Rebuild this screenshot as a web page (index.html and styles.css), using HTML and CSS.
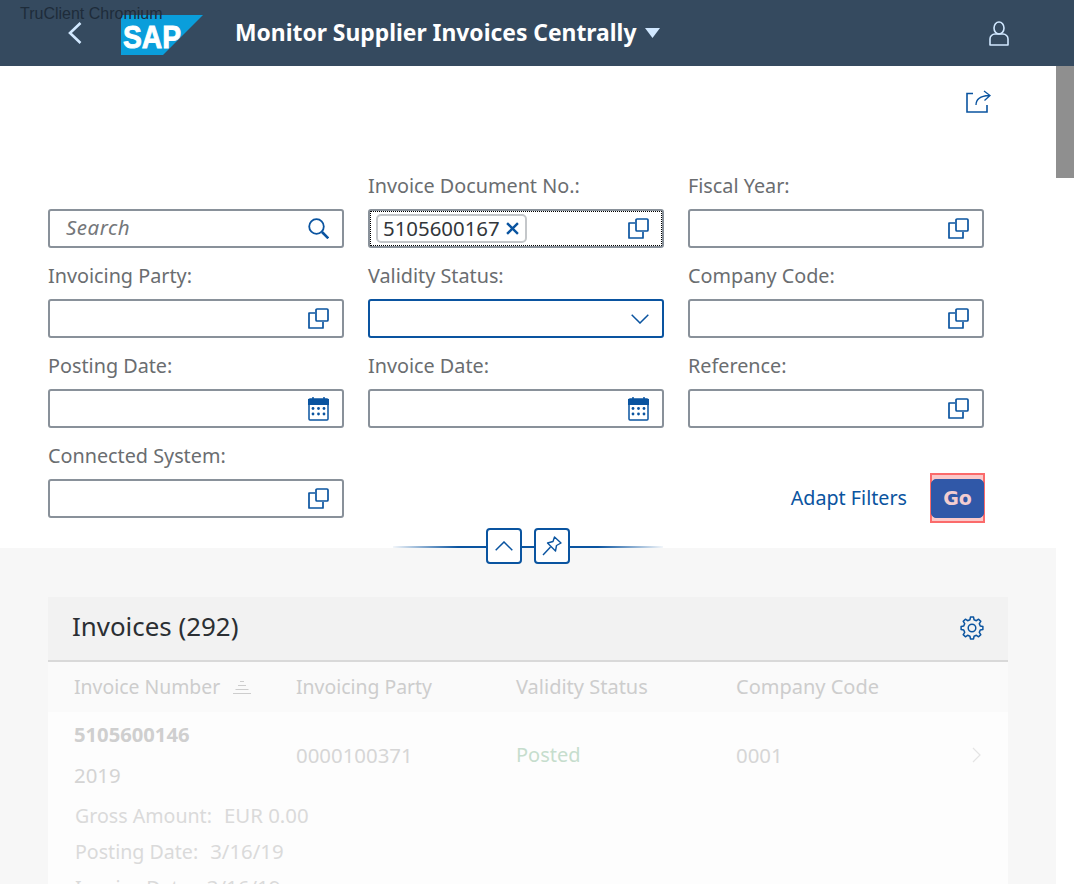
FILE: index.html
```html
<!DOCTYPE html>
<html lang="en">
<head>
<meta charset="utf-8">
<title>Monitor Supplier Invoices Centrally</title>
<link rel="stylesheet" href="styles.css">
</head>
<body>
<svg class="defs" xmlns="http://www.w3.org/2000/svg">
  <symbol id="i-vh" viewBox="0 0 21 21">
    <path d="M7 5H1v15h14v-6" fill="none" stroke="currentColor" stroke-width="1.700" stroke-linejoin="round"/>
    <rect x="8" y="1" width="12" height="12" rx="1" fill="none" stroke="currentColor" stroke-width="1.700"/>
  </symbol>
  <symbol id="i-cal" viewBox="0 0 21 25">
    <rect x="1" y="3" width="19" height="21" rx="1" fill="#fff" stroke="currentColor" stroke-width="1.500"/>
    <path d="M0 3h21v6H0z" fill="currentColor"/>
    <path d="M5 1v4M16 1v4" stroke="currentColor" stroke-width="1.500"/>
    <g fill="currentColor">
      <circle cx="5" cy="12.500" r="1.400"/><circle cx="10.500" cy="12.500" r="1.400"/><circle cx="16" cy="12.500" r="1.400"/>
      <circle cx="5" cy="18" r="1.400"/><circle cx="10.500" cy="18" r="1.400"/><circle cx="16" cy="18" r="1.400"/>
    </g>
  </symbol>
</svg>

<header class="shell">
  <span class="tool-label">TruClient Chromium</span>
  <svg class="back" viewBox="0 0 14 22"><path d="M12.500 1 2 11l10.500 10" fill="none" stroke="currentColor" stroke-width="2.600"/></svg>
  <svg class="logo" viewBox="0 0 82 40">
    <path d="M0 0h82L42 40H0z" fill="#0a9edb"/>
    <text x="2" y="33" class="logo-text" textLength="58" lengthAdjust="spacingAndGlyphs">SAP</text>
  </svg>
  <h1 class="title">Monitor Supplier Invoices Centrally</h1>
  <svg class="caret" viewBox="0 0 15 10"><path d="M0 0h15L7.500 10z" fill="currentColor"/></svg>
  <svg class="user" viewBox="0 0 20 25"><g fill="none" stroke="currentColor" stroke-width="1.600"><ellipse cx="10" cy="7" rx="5" ry="6"/><path d="M1 24v-6a5 5 0 0 1 5-5h8a5 5 0 0 1 5 5v6z" stroke-linejoin="round"/></g></svg>
</header>

<div class="page">
  <main class="main">
    <section class="filters">
      <div class="share-row">
        <svg class="share" viewBox="0 0 25 23"><g fill="none" stroke="currentColor" stroke-width="1.600"><path d="M7 3.500H1v18.500h20V15"/><path d="M10 15c0-5 4-9 13-9.500M18 1l6 4.500-5.500 5" stroke-width="1.300"/></g></svg>
      </div>
      <div class="filter-grid">
        <div class="field">
          <div class="input"><span class="placeholder">Search</span>
            <svg class="ico search" viewBox="0 0 21 21"><g fill="none" stroke="currentColor"><circle cx="8.500" cy="8.500" r="7.300" stroke-width="1.800"/><path d="m14 14 6.300 6.300" stroke-width="2.600"/></g></svg>
          </div>
        </div>
        <div class="field">
          <label class="label">Invoice Document No.:</label>
          <div class="input focused">
            <span class="token">5105600167<svg class="token-x" viewBox="0 0 12 12"><path d="m1 1 10 10M11 1 1 11" stroke="currentColor" stroke-width="2.200"/></svg></span>
            <svg class="ico"><use href="#i-vh"/></svg>
          </div>
        </div>
        <div class="field">
          <label class="label">Fiscal Year:</label>
          <div class="input"><svg class="ico"><use href="#i-vh"/></svg></div>
        </div>

        <div class="field">
          <label class="label">Invoicing Party:</label>
          <div class="input"><svg class="ico"><use href="#i-vh"/></svg></div>
        </div>
        <div class="field">
          <label class="label">Validity Status:</label>
          <div class="input active"><svg class="ico chev" viewBox="0 0 18 10"><path d="m.7.7 8.300 8.300L17.300.7" fill="none" stroke="currentColor" stroke-width="1.500"/></svg></div>
        </div>
        <div class="field">
          <label class="label">Company Code:</label>
          <div class="input"><svg class="ico"><use href="#i-vh"/></svg></div>
        </div>

        <div class="field">
          <label class="label">Posting Date:</label>
          <div class="input"><svg class="ico cal"><use href="#i-cal"/></svg></div>
        </div>
        <div class="field">
          <label class="label">Invoice Date:</label>
          <div class="input"><svg class="ico cal"><use href="#i-cal"/></svg></div>
        </div>
        <div class="field">
          <label class="label">Reference:</label>
          <div class="input"><svg class="ico"><use href="#i-vh"/></svg></div>
        </div>

        <div class="field">
          <label class="label">Connected System:</label>
          <div class="input"><svg class="ico"><use href="#i-vh"/></svg></div>
        </div>
        <div class="actions">
          <a class="adapt">Adapt Filters</a>
          <button class="go">Go</button>
        </div>
      </div>
      <div class="collapse-row">
        <span class="rule rule-left"></span>
        <span class="round-btn"><svg class="btn-chev" viewBox="0 0 18 10"><path d="M.7 9.300 9 1l8.300 8.300" fill="none" stroke="currentColor" stroke-width="1.500"/></svg></span>
        <span class="rule-mid"></span>
        <span class="round-btn"><svg class="btn-pin" viewBox="0 0 20 20"><g fill="none" stroke="currentColor" stroke-width="1.400" stroke-linejoin="round"><path d="M12.500 1 19 7l-4.500 2.500-1 5.500-8-8 5.500-1.500z"/><path d="m8.500 11-7.500 8" /></g></svg></span>
        <span class="rule rule-right"></span>
      </div>
    </section>

    <section class="content">
      <div class="panel">
        <div class="toolbar">
          <h2 class="panel-title">Invoices (292)</h2>
          <svg class="gear" viewBox="0 0 24 24"><g fill="none" stroke="currentColor" stroke-width="1.500" stroke-linejoin="round"><path d="M9.940 3.750 10.470 1.110H13.530L14.060 3.750 16.380 4.710 18.620 3.210 20.790 5.380 19.290 7.620 20.250 9.940 22.890 10.470V13.530L20.250 14.060 19.290 16.380 20.790 18.620 18.620 20.790 16.380 19.290 14.060 20.250 13.530 22.890H10.470L9.940 20.250 7.620 19.290 5.380 20.790 3.210 18.620 4.710 16.380 3.750 14.060 1.110 13.530V10.470L3.750 9.940 4.710 7.620 3.210 5.380 5.380 3.210 7.620 4.710z"/><circle cx="12" cy="12" r="3.800"/></g></svg>
        </div>
        <div class="table-head">
          <span class="col-head">Invoice Number<svg class="sort" viewBox="0 0 18 13"><path d="M7 .5h4M5 4.500h8M2.500 8.500h13M0 12.500h18" stroke="currentColor"/></svg></span>
          <span class="col-head">Invoicing Party</span>
          <span class="col-head col-wide">Validity Status</span>
          <span class="col-head col-wide">Company Code</span>
        </div>
        <div class="table-row">
          <div class="cell-main">
            <div class="inv-no">5105600146</div>
            <div class="inv-year">2019</div>
            <div class="inv-attrs">
              <div class="attr"><span class="attr-name">Gross Amount:</span><span class="attr-val">EUR 0.00</span></div>
              <div class="attr"><span class="attr-name">Posting Date:</span><span class="attr-val">3/16/19</span></div>
              <div class="attr"><span class="attr-name">Invoice Date:</span><span class="attr-val">3/16/19</span></div>
            </div>
          </div>
          <div class="cell num">0000100371</div>
          <div class="cell posted">Posted</div>
          <div class="cell num">0001</div>
          <svg class="row-chev" viewBox="0 0 9 16"><path d="m1 1 7 7-7 7" fill="none" stroke="currentColor" stroke-width="1.200"/></svg>
        </div>
      </div>
    </section>
  </main>
  <div class="scrollbar"><div class="thumb"></div></div>
</div>
</body>
</html>
```

FILE: styles.css
```css
* { box-sizing: border-box; }

html, body {
  margin: 0;
  height: 100%;
  overflow: hidden;
  background: #fff;
  font-family: "Noto Sans", "Open Sans", sans-serif;
  font-size: 18px;
  color: #32363a;
}

.defs { display: none; }

/* Shell header */
.shell {
  position: relative;
  height: 66px;
  background: #354a5f;
  display: flex;
  align-items: center;
  color: #d1e8ff;
}
.tool-label {
  position: absolute;
  left: 20px;
  top: 5px;
  font: 16px/18px "Liberation Sans", Arial, sans-serif;
  color: #1e2c3a;
  z-index: 2;
}
.back { width: 14px; height: 22px; margin-left: 68px; }
.logo { width: 82px; height: 40px; margin-left: 39px; margin-top: 4px; }
.logo-text {
  font: 700 32px "Liberation Sans", Arial, sans-serif;
  fill: #fff;
  stroke: #fff;
  stroke-width: .9px;
}
.title {
  margin: -2px 0 0 32px;
  font-size: 22.850px;
  font-weight: 700;
  color: #fff;
  white-space: nowrap;
  width: 402px;
}
.caret { width: 15px; height: 10px; margin-left: 8px; }
.user { width: 20px; height: 25px; margin-left: auto; margin-right: 65px; }

/* Page */
.page { display: flex; height: 818px; }
.main { flex: 1; min-width: 0; overflow: hidden; display: flex; flex-direction: column; }
.scrollbar { width: 18px; background: #fff; }
.thumb { height: 112px; background: #8f8f8f; }

/* Filter bar */
.filters { height: 482px; flex: none; background: #fff; display: flex; flex-direction: column; }
.share-row { height: 92px; flex: none; display: flex; justify-content: flex-end; padding: 24px 65px 0 0; }
.share { width: 25px; height: 23px; color: #0a54a0; }

.filter-grid {
  margin-left: 48px;
  width: 936px;
  display: grid;
  grid-template-columns: repeat(3, 296px);
  grid-auto-rows: 90px;
  column-gap: 24px;
}
.field { display: flex; flex-direction: column; justify-content: flex-end; }
.label { color: #6a6d70; font-size: 19.800px; line-height: 24px; margin-bottom: 11px; white-space: nowrap; }

.input {
  height: 39px;
  border: 2px solid #89919a;
  border-radius: 3px;
  display: flex;
  align-items: center;
  background: #fff;
  padding: 0 13px 0 16px;
}
.input.focused {
  outline: 1px dotted #000;
  outline-offset: -3px;
  padding-left: 6px;
}
.input.active { border-color: #0a54a0; }
.placeholder { font-style: italic; color: #74777a; font-size: 20.500px; letter-spacing: .5px; margin-bottom: 3px; }
.ico { width: 21px; height: 21px; margin-left: auto; color: #0a54a0; flex: none; }
.ico.cal { height: 25px; }
.ico.chev { width: 18px; height: 10px; }

.token {
  display: flex;
  align-items: center;
  height: 29px;
  border: 2px solid #c4c7ca;
  border-radius: 5px;
  padding: 0 6px 2px 5px;
  font-size: 20.400px;
  white-space: nowrap;
  color: #32363a;
}
.token-x { width: 13px; height: 13px; margin-left: 6px; margin-top: 2px; color: #0a54a0; }

.actions {
  grid-column: 2 / 4;
  display: flex;
  justify-content: flex-end;
  align-items: flex-end;
  isolation: isolate;
}
.adapt { color: #0a54a0; line-height: 37px; margin-bottom: 2px; margin-right: 24px; font-size: 19.700px; }
.go {
  position: relative;
  width: 53px;
  height: 39px;
  border: 1px solid #2e5aa8;
  border-radius: 5px;
  background: #3058a8;
  color: #f3cdd0;
  font: 700 19px "DejaVu Sans", Verdana, sans-serif;
  padding: 0 0 2px;
}
.go::after {
  content: "";
  position: absolute;
  z-index: -1;
  inset: -7px -2px -6px -2px;
  border: 2px solid #fb6b6b;
  background: #fbc9c9;
}

.collapse-row {
  position: relative;
  z-index: 1;
  margin: 10px auto -16px;
  width: 270px;
  height: 36px;
  flex: none;
  display: flex;
  align-items: flex-start;
}
.rule, .rule-mid { height: 2px; margin-top: 18px; }
.rule { flex: 1; }
.rule-left { background: linear-gradient(to right, rgba(10,84,160,.05), #0a54a0 70%); }
.rule-right { background: linear-gradient(to left, rgba(10,84,160,.05), #0a54a0 70%); }
.rule-mid { width: 12px; background: #0a54a0; }
.round-btn {
  width: 36px;
  height: 36px;
  flex: none;
  border: 2px solid #0a54a0;
  border-radius: 4px;
  background: #fff;
  color: #0a54a0;
  display: flex;
  align-items: center;
  justify-content: center;
}
.btn-chev { width: 18px; height: 10px; }
.btn-pin { width: 20px; height: 20px; }

/* Content */
.content { flex: 1; background: #f7f7f7; padding: 49px 48px 0; overflow: hidden; }
.panel { background: #fdfdfd; }
.toolbar {
  height: 65px;
  background: #f2f2f2;
  border-bottom: 2px solid #d9d9d9;
  display: flex;
  align-items: center;
  justify-content: space-between;
  padding: 0 24px;
}
.panel-title { margin: -5px 0 0; font-size: 25.900px; font-weight: 400; color: #2b2f33; }
.gear { width: 24px; height: 24px; color: #0a54a0; margin-top: -2px; }

.table-head, .table-row {
  display: grid;
  grid-template-columns: 222px 220px 220px 1fr 24px;
  padding-left: 26px;
}
.table-head {
  height: 50px;
  background: #fafafa;
  align-items: center;
  color: #cdcdcd;
  font-size: 19.400px;
  padding-bottom: 2px;
}
.col-wide { font-size: 20px; }
.sort { width: 18px; height: 13px; margin-left: 13px; }

.table-row { position: relative; color: #d6d6d6; height: 240px; padding-right: 12px; font-size: 20px; }
.cell { margin-top: 30px; line-height: 26px; }
.cell.num { font-size: 20.400px; }
.posted { color: #c6ddcd; }
.inv-no { font-weight: 700; color: #cfcfcf; line-height: 26px; margin-top: 9px; font-size: 20.200px; }
.inv-year { line-height: 26px; margin-top: 15px; color: #d4d4d4; font-size: 20.400px; }
.inv-attrs { margin-top: 14px; white-space: nowrap; }
.attr { display: flex; gap: 12px; height: 26px; line-height: 26px; margin-bottom: 10px; margin-left: 1px; color: #dadada; font-size: 19.600px; align-items: baseline; }
.attr-val { font-size: 20.400px; }
.row-chev { width: 9px; height: 16px; margin-top: 35px; color: #e4e4e4; }
```
